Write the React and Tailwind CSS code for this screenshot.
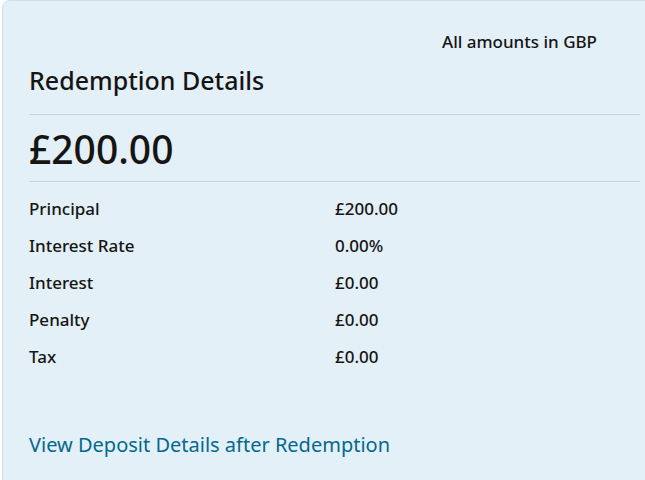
import React from 'react';

const rows = [
  { label: 'Principal', value: '£200.00' },
  { label: 'Interest Rate', value: '0.00%' },
  { label: 'Interest', value: '£0.00' },
  { label: 'Penalty', value: '£0.00' },
  { label: 'Tax', value: '£0.00' },
];

export default function App() {
  return (
    <div className="w-[645px] h-[480px] overflow-hidden bg-white" style={{ fontFamily: '"Noto Sans", "Open Sans", sans-serif' }}>
      <div className="ml-[2px] w-[680px] h-[500px] border border-[#d3dce2] rounded-tl-lg bg-[#e3f0f7] text-[#161513] pl-[26px]">
        <div className="w-[611px]">
          <div className="flex justify-end pt-[29px] pr-[43px] text-[17px] leading-[24px] font-medium">All amounts in GBP</div>
          <h2 className="mt-[11px] text-[25px] leading-[30px] pb-[19px] font-medium border-b border-[#c9d4db]">Redemption Details</h2>
          <div className="text-[39px] leading-[44px] pt-[12px] pb-[10px] font-medium border-b border-[#c9d4db]">£200.00</div>
          <div className="pt-[15px]">
            {rows.map((r) => (
              <div key={r.label} className="flex h-[37px] text-[17px] leading-[24px] font-medium">
                <span className="w-[306px]">{r.label}</span>
                <span>{r.value}</span>
              </div>
            ))}
          </div>
          <a href="#" className="block mt-[49px] text-[20px] leading-[28px] text-[#04688f]">View Deposit Details after Redemption</a>
        </div>
      </div>
    </div>
  );
}
